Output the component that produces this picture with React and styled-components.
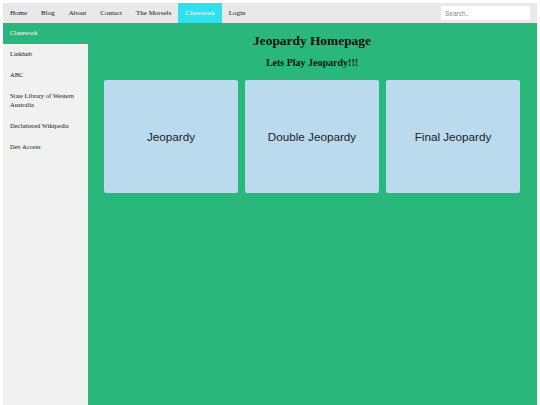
import React from "react";
import styled, { createGlobalStyle } from "styled-components";

const GlobalStyle = createGlobalStyle`
  body {
    margin: 3px;
    background: #ffffff;
    font-family: "Liberation Serif", "Times New Roman", serif;
  }
`;

const TopNav = styled.nav`
  display: flex;
  align-items: center;
  height: 20px;
  background-color: #e9e9e9;
  padding-right: 7px;
`;

const NavLink = styled.a`
  display: block;
  height: 20px;
  line-height: 20px;
  padding: 0 7px;
  font-size: 7px;
  color: ${(props) => (props.active ? "#ffffff" : "#111111")};
  background-color: ${(props) => (props.active ? "#2fe0ef" : "transparent")};
  text-decoration: none;
`;

const Search = styled.input`
  margin-left: auto;
  width: 89px;
  height: 14px;
  box-sizing: border-box;
  border: none;
  outline: none;
  padding: 0 4px;
  font-family: "Liberation Sans", Arial, sans-serif;
  font-size: 6.5px;
  background: #ffffff;
  &::placeholder {
    color: #8a8a8a;
  }
`;

const Layout = styled.div`
  display: grid;
  grid-template-columns: 85px 1fr;
  min-height: 400px;
`;

const SideNav = styled.aside`
  background-color: #f1f1f1;
`;

const SideLink = styled.a`
  display: block;
  padding: 6.25px 7px;
  font-size: 6.5px;
  line-height: 8.5px;
  color: ${(props) => (props.active ? "#ffffff" : "#111111")};
  background-color: ${(props) => (props.active ? "#2ab77b" : "transparent")};
  text-decoration: none;
`;

const Main = styled.main`
  background-color: #2ab77b;
  padding: 10px 17px 0 16px;
  text-align: center;
`;

const Title = styled.h1`
  margin: 0;
  font-size: 13.4px;
  line-height: 16px;
  color: #111111;
`;

const Subtitle = styled.h2`
  margin: 8px 0 11px;
  font-size: 10px;
  line-height: 12px;
  color: #111111;
`;

const CardGrid = styled.div`
  display: grid;
  grid-template-columns: repeat(3, 1fr);
  gap: 7px;
`;

const Card = styled.div`
  display: flex;
  align-items: center;
  justify-content: center;
  height: 113px;
  background-color: #b9dbed;
  border-radius: 2px;
  font-family: "Liberation Sans", Arial, sans-serif;
  font-size: 11.7px;
  color: #222222;
`;

const navItems = ["Home", "Blog", "About", "Contact", "The Morsels", "Classwork", "Login"];
const sideItems = [
  "Classwork",
  "Linkhub",
  "ABC",
  "State Library of Western Australia",
  "Decluttered Wikipedia",
  "Dev Access",
];
const games = ["Jeopardy", "Double Jeopardy", "Final Jeopardy"];

const App = () => {
  return (
    <>
      <GlobalStyle />
      <TopNav>
        {navItems.map((item) => (
          <NavLink key={item} href="#" active={item === "Classwork" ? 1 : 0}>
            {item}
          </NavLink>
        ))}
        <Search type="text" placeholder="Search.." />
      </TopNav>
      <Layout>
        <SideNav>
          {sideItems.map((item, i) => (
            <SideLink key={item} href="#" active={i === 0 ? 1 : 0}>
              {item}
            </SideLink>
          ))}
        </SideNav>
        <Main>
          <Title>Jeopardy Homepage</Title>
          <Subtitle>Lets Play Jeopardy!!!</Subtitle>
          <CardGrid>
            {games.map((g) => (
              <Card key={g}>{g}</Card>
            ))}
          </CardGrid>
        </Main>
      </Layout>
    </>
  );
};

export default App;
